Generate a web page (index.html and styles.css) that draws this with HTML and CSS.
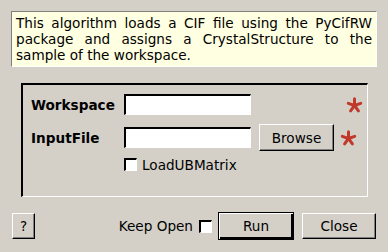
FILE: index.html
```html
<!DOCTYPE html>
<html lang="en">
<head>
  <meta charset="UTF-8">
  <title>LoadCIF</title>
  <link rel="stylesheet" href="styles.css">
</head>
<body>
  <div class="dialog">
    <div class="description">This algorithm loads a CIF file using the PyCifRW package and assigns a CrystalStructure to the sample of the workspace.</div>

    <div class="group">
      <div class="row">
        <label class="prop">Workspace</label>
        <input class="field" type="text">
        <span class="spacer"></span>
        <svg class="star" viewBox="0 0 16 16"><g stroke="#c0392b" stroke-width="3" stroke-linecap="round"><line x1="8" y1="8.5" x2="8" y2="1.8"/><line x1="8" y1="8.5" x2="14.2" y2="6.3"/><line x1="8" y1="8.5" x2="11.9" y2="13.8"/><line x1="8" y1="8.5" x2="4.1" y2="13.8"/><line x1="8" y1="8.5" x2="1.8" y2="6.3"/></g></svg>
      </div>
      <div class="row">
        <label class="prop">InputFile</label>
        <input class="field" type="text">
        <button class="btn browse">Browse</button>
        <svg class="star" viewBox="0 0 16 16"><g stroke="#c0392b" stroke-width="3" stroke-linecap="round"><line x1="8" y1="8.5" x2="8" y2="1.8"/><line x1="8" y1="8.5" x2="14.2" y2="6.3"/><line x1="8" y1="8.5" x2="11.9" y2="13.8"/><line x1="8" y1="8.5" x2="4.1" y2="13.8"/><line x1="8" y1="8.5" x2="1.8" y2="6.3"/></g></svg>
      </div>
      <div class="row check-row">
        <span class="box"></span>
        <span>LoadUBMatrix</span>
      </div>
    </div>

    <div class="footer">
      <button class="btn help">?</button>
      <span class="grow"></span>
      <span>Keep Open</span>
      <span class="box keep"></span>
      <button class="btn run">Run</button>
      <button class="btn close">Close</button>
    </div>
  </div>
</body>
</html>
```

FILE: styles.css
```css
body {
  margin: 0;
  background-color: #d4d0c8;
  font-family: "DejaVu Sans", sans-serif;
  font-size: 13.6px;
  color: #000;
}

.dialog {
  width: 388px;
  height: 252px;
  padding: 11px 11px 0 11px;
  box-sizing: border-box;
}

.description {
  height: 56px;
  box-sizing: border-box;
  padding: 3px 4px 0 4px;
  line-height: 16px;
  text-align: justify;
  background-color: #ffffe1;
  border: 1px solid;
  border-color: #808080 #ffffff #ffffff #808080;
}

.group {
  margin: 16px 9px 0 10px;
  height: 114px;
  box-sizing: border-box;
  padding: 6px 0 0 8px;
  border-style: solid;
  border-color: #000 #fff #fff #000;
  border-width: 2px 1px 1px 2px;
}

.row {
  display: flex;
  align-items: center;
  height: 27px;
  margin-bottom: 6px;
}

.prop {
  font-weight: bold;
  width: 93px;
}

.field {
  width: 127px;
  height: 21px;
  box-sizing: border-box;
  margin: 0;
  padding: 0 2px;
  background: #fff;
  border-style: solid;
  border-color: #000 #fff #fff #000;
  border-width: 2px 1px 1px 2px;
  font: inherit;
}

.spacer {
  width: 89px;
}

.btn {
  font: inherit;
  color: #000;
  background-color: #d4d0c8;
  border: 1px solid;
  border-color: #fff #000 #000 #fff;
  box-shadow: inset -1px -1px 0 #808080;
  padding: 0;
  margin: 0;
}

.browse {
  width: 75px;
  height: 27px;
  margin-left: 8px;
}

.star {
  width: 17px;
  height: 16px;
  margin-left: 6px;
}

.check-row {
  height: 15px;
  padding-left: 93px;
  margin-top: 3px;
}

.box {
  display: inline-block;
  width: 13px;
  height: 13px;
  box-sizing: border-box;
  background: #fff;
  border-style: solid;
  border-color: #000 #fff #fff #000;
  border-width: 2px 1px 1px 2px;
  margin-right: 5px;
}

.footer {
  display: flex;
  align-items: center;
  margin-top: 15px;
  margin-left: 1px;
  padding-right: 1px;
  height: 28px;
}

.grow {
  flex: 1;
}

.help {
  width: 23px;
  height: 26px;
}

.keep {
  margin-left: 6px;
  margin-right: 6px;
}

.run {
  width: 76px;
  height: 28px;
  border: 1px solid #000;
  box-shadow: inset 1px 1px 0 #fff, inset -2px -2px 0 #000;
}

.close {
  width: 74px;
  height: 26px;
  margin-left: 8px;
}
```
